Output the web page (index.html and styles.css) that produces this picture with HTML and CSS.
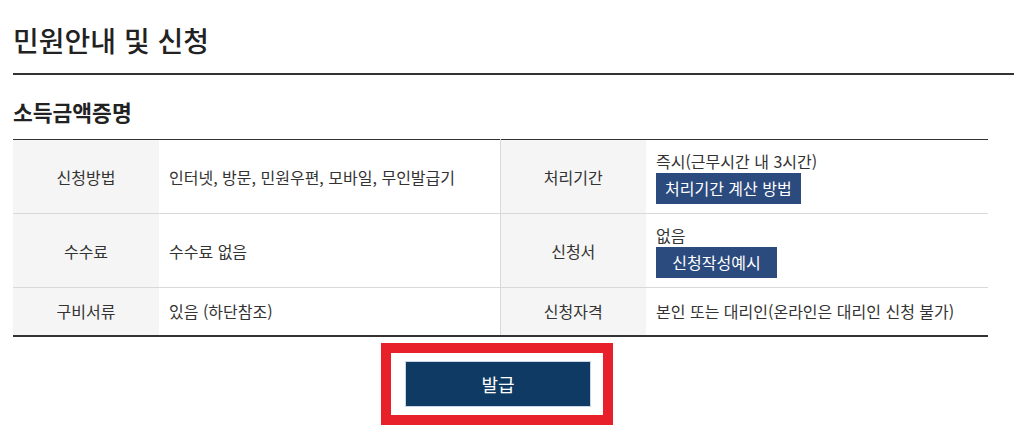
FILE: index.html
```html
<!DOCTYPE html>
<html lang="ko">
<head>
  <meta charset="UTF-8" />
  <meta name="viewport" content="width=device-width, initial-scale=1.0"/>
  <title>민원안내 및 신청</title>
  <link rel="stylesheet" href="styles.css">
</head>
<body>

  <div class="page">
    <h2 class="page-title">민원안내 및 신청</h2>

    <h3 class="section-title">소득금액증명</h3>

    <table class="info-table">
      <colgroup>
        <col class="col-th" />
        <col class="col-td" />
        <col class="col-th2" />
        <col />
      </colgroup>
      <tr class="row-tall">
        <th>신청방법</th>
        <td>인터넷, 방문, 민원우편, 모바일, 무인발급기</td>
        <th class="th-right">처리기간</th>
        <td>
          <div>즉시(근무시간 내 3시간)</div>
          <span class="small-btn">처리기간 계산 방법</span>
        </td>
      </tr>
      <tr class="row-tall">
        <th>수수료</th>
        <td>수수료 없음</td>
        <th class="th-right">신청서</th>
        <td>
          <div>없음</div>
          <span class="small-btn">신청작성예시</span>
        </td>
      </tr>
      <tr class="row-short">
        <th>구비서류</th>
        <td>있음 (하단참조)</td>
        <th class="th-right">신청자격</th>
        <td>본인 또는 대리인(온라인은 대리인 신청 불가)</td>
      </tr>
    </table>

    <div class="button-row">
      <div class="highlight-box">
        <div class="issue-button">발급</div>
      </div>
    </div>
  </div>

</body>
</html>
```

FILE: styles.css
```css
body {
  margin: 0;
  font-family: "Noto Sans CJK KR", "Noto Sans", sans-serif;
  color: #333;
  background-color: #fff;
}
.page {
  padding-left: 13px;
}
.page-title {
  margin: 0;
  padding-top: 20px;
  padding-bottom: 13px;
  font-size: 28px;
  line-height: 40px;
  font-weight: 500;
  color: #222;
  border-bottom: 2px solid #333;
}
.section-title {
  margin: 23px 0 13px 0;
  font-size: 21.5px;
  line-height: 28px;
  font-weight: 700;
  color: #222;
}
.info-table {
  width: 975px;
  border-collapse: collapse;
  border-top: 1px solid #333;
  border-bottom: 2px solid #333;
  font-size: 16px;
  table-layout: fixed;
}
.col-th {
  width: 146px;
}
.col-td {
  width: 341px;
}
.col-th2 {
  width: 146px;
}
.info-table th {
  background-color: #f5f5f5;
  font-weight: 400;
  text-align: center;
  color: #333;
}
.info-table td {
  padding: 0 10px;
  text-align: left;
  line-height: 22px;
}
.info-table tr + tr th,
.info-table tr + tr td {
  border-top: 1px solid #d9d9d9;
}
.info-table .th-right {
  border-left: 1px solid #d9d9d9;
}
.row-tall {
  height: 74px;
}
.row-short {
  height: 48px;
}
.small-btn {
  display: inline-block;
  min-width: 121px;
  box-sizing: border-box;
  margin-top: 1px;
  padding: 4px 9px 5px;
  background-color: #2b4a7d;
  color: #fff;
  font-size: 16px;
  line-height: 22px;
  text-align: center;
}
.button-row {
  width: 975px;
  display: flex;
  justify-content: center;
  margin-top: 6px;
}
.highlight-box {
  border: 10px solid #e8202a;
  padding: 8px 12px 8px 14px;
  width: 186px;
  margin-left: -7px;
}
.issue-button {
  height: 44px;
  line-height: 44px;
  background-color: #0f3a63;
  border: 1px solid #c8d6e6;
  color: #fff;
  text-align: center;
  font-size: 18px;
}
```
